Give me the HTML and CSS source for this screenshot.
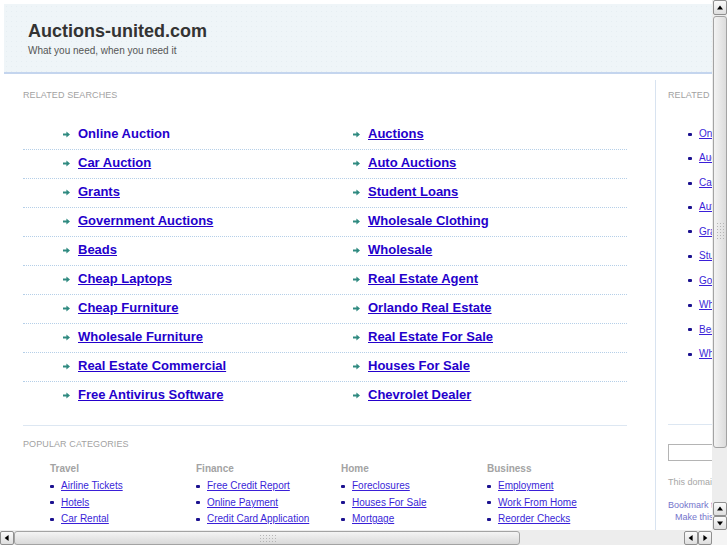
FILE: index.html
```html
<!DOCTYPE html>
<html>
<head>
<meta charset="utf-8">
<title>Auctions-united.com</title>
<link rel="stylesheet" href="styles.css">
</head>
<body>
<div class="viewport">
  <div class="content">
    <div class="page">
      <header class="header">
        <h1 class="title">Auctions-united.com</h1>
        <p class="tagline">What you need, when you need it</p>
      </header>
      <div class="main">
        <div class="leftcol">
          <h2 class="label">RELATED SEARCHES</h2>
          <div class="rs-list">
            <div class="rs-row"><div class="rs-cell"><svg class="arr" viewBox="0 0 7 7"><path d="M0 2.5h3.4V0.4L7 3.5 3.4 6.6V4.5H0z"/></svg><a class="big nou">Online Auction</a></div><div class="rs-cell"><svg class="arr" viewBox="0 0 7 7"><path d="M0 2.5h3.4V0.4L7 3.5 3.4 6.6V4.5H0z"/></svg><a class="big">Auctions</a></div></div>
            <div class="rs-row"><div class="rs-cell"><svg class="arr" viewBox="0 0 7 7"><path d="M0 2.5h3.4V0.4L7 3.5 3.4 6.6V4.5H0z"/></svg><a class="big">Car Auction</a></div><div class="rs-cell"><svg class="arr" viewBox="0 0 7 7"><path d="M0 2.5h3.4V0.4L7 3.5 3.4 6.6V4.5H0z"/></svg><a class="big">Auto Auctions</a></div></div>
            <div class="rs-row"><div class="rs-cell"><svg class="arr" viewBox="0 0 7 7"><path d="M0 2.5h3.4V0.4L7 3.5 3.4 6.6V4.5H0z"/></svg><a class="big">Grants</a></div><div class="rs-cell"><svg class="arr" viewBox="0 0 7 7"><path d="M0 2.5h3.4V0.4L7 3.5 3.4 6.6V4.5H0z"/></svg><a class="big">Student Loans</a></div></div>
            <div class="rs-row"><div class="rs-cell"><svg class="arr" viewBox="0 0 7 7"><path d="M0 2.5h3.4V0.4L7 3.5 3.4 6.6V4.5H0z"/></svg><a class="big">Government Auctions</a></div><div class="rs-cell"><svg class="arr" viewBox="0 0 7 7"><path d="M0 2.5h3.4V0.4L7 3.5 3.4 6.6V4.5H0z"/></svg><a class="big">Wholesale Clothing</a></div></div>
            <div class="rs-row"><div class="rs-cell"><svg class="arr" viewBox="0 0 7 7"><path d="M0 2.5h3.4V0.4L7 3.5 3.4 6.6V4.5H0z"/></svg><a class="big">Beads</a></div><div class="rs-cell"><svg class="arr" viewBox="0 0 7 7"><path d="M0 2.5h3.4V0.4L7 3.5 3.4 6.6V4.5H0z"/></svg><a class="big">Wholesale</a></div></div>
            <div class="rs-row"><div class="rs-cell"><svg class="arr" viewBox="0 0 7 7"><path d="M0 2.5h3.4V0.4L7 3.5 3.4 6.6V4.5H0z"/></svg><a class="big">Cheap Laptops</a></div><div class="rs-cell"><svg class="arr" viewBox="0 0 7 7"><path d="M0 2.5h3.4V0.4L7 3.5 3.4 6.6V4.5H0z"/></svg><a class="big">Real Estate Agent</a></div></div>
            <div class="rs-row"><div class="rs-cell"><svg class="arr" viewBox="0 0 7 7"><path d="M0 2.5h3.4V0.4L7 3.5 3.4 6.6V4.5H0z"/></svg><a class="big">Cheap Furniture</a></div><div class="rs-cell"><svg class="arr" viewBox="0 0 7 7"><path d="M0 2.5h3.4V0.4L7 3.5 3.4 6.6V4.5H0z"/></svg><a class="big">Orlando Real Estate</a></div></div>
            <div class="rs-row"><div class="rs-cell"><svg class="arr" viewBox="0 0 7 7"><path d="M0 2.5h3.4V0.4L7 3.5 3.4 6.6V4.5H0z"/></svg><a class="big">Wholesale Furniture</a></div><div class="rs-cell"><svg class="arr" viewBox="0 0 7 7"><path d="M0 2.5h3.4V0.4L7 3.5 3.4 6.6V4.5H0z"/></svg><a class="big">Real Estate For Sale</a></div></div>
            <div class="rs-row"><div class="rs-cell"><svg class="arr" viewBox="0 0 7 7"><path d="M0 2.5h3.4V0.4L7 3.5 3.4 6.6V4.5H0z"/></svg><a class="big">Real Estate Commercial</a></div><div class="rs-cell"><svg class="arr" viewBox="0 0 7 7"><path d="M0 2.5h3.4V0.4L7 3.5 3.4 6.6V4.5H0z"/></svg><a class="big">Houses For Sale</a></div></div>
            <div class="rs-row last"><div class="rs-cell"><svg class="arr" viewBox="0 0 7 7"><path d="M0 2.5h3.4V0.4L7 3.5 3.4 6.6V4.5H0z"/></svg><a class="big">Free Antivirus Software</a></div><div class="rs-cell"><svg class="arr" viewBox="0 0 7 7"><path d="M0 2.5h3.4V0.4L7 3.5 3.4 6.6V4.5H0z"/></svg><a class="big">Chevrolet Dealer</a></div></div>
          </div>
          <div class="popular">
            <h2 class="label">POPULAR CATEGORIES</h2>
            <div class="cats">
              <div class="cat">
                <h3 class="cat-title">Travel</h3>
                <ul class="cat-list">
                  <li><a class="small">Airline Tickets</a></li>
                  <li><a class="small">Hotels</a></li>
                  <li><a class="small">Car Rental</a></li>
                </ul>
              </div>
              <div class="cat">
                <h3 class="cat-title">Finance</h3>
                <ul class="cat-list">
                  <li><a class="small">Free Credit Report</a></li>
                  <li><a class="small">Online Payment</a></li>
                  <li><a class="small">Credit Card Application</a></li>
                </ul>
              </div>
              <div class="cat">
                <h3 class="cat-title">Home</h3>
                <ul class="cat-list">
                  <li><a class="small">Foreclosures</a></li>
                  <li><a class="small">Houses For Sale</a></li>
                  <li><a class="small">Mortgage</a></li>
                </ul>
              </div>
              <div class="cat">
                <h3 class="cat-title">Business</h3>
                <ul class="cat-list">
                  <li><a class="small">Employment</a></li>
                  <li><a class="small">Work From Home</a></li>
                  <li><a class="small">Reorder Checks</a></li>
                </ul>
              </div>
            </div>
          </div>
        </div>
        <div class="rightcol">
          <h2 class="label">RELATED SEARCHES</h2>
          <ul class="side-list">
            <li><a class="small">Online Auction</a></li>
            <li><a class="small">Auctions</a></li>
            <li><a class="small">Car Auction</a></li>
            <li><a class="small">Auto Auctions</a></li>
            <li><a class="small">Grants</a></li>
            <li><a class="small">Student Loans</a></li>
            <li><a class="small">Government Auctions</a></li>
            <li><a class="small">Wholesale Clothing</a></li>
            <li><a class="small">Beads</a></li>
            <li><a class="small">Wholesale</a></li>
          </ul>
          <div class="side-bottom">
            <div class="search-box"></div>
            <p class="domain-note">This domain may be for sale</p>
            <p class="bm"><a class="bm-link">Bookmark this page</a></p>
            <p class="bm indent"><a class="bm-link">Make this your Homepage</a></p>
          </div>
        </div>
      </div>
    </div>
  </div>
  <div class="vscroll">
    <div class="sbtn up"></div>
    <div class="vthumb"><span class="grip vgrip"></span></div>
    <div class="vtrough"></div>
    <div class="sbtn up"></div>
    <div class="sbtn down"></div>
  </div>
  <div class="hscroll">
    <div class="sbtn left"></div>
    <div class="hthumb"><span class="grip hgrip"></span></div>
    <div class="htrough"></div>
    <div class="sbtn left"></div>
    <div class="sbtn right"></div>
  </div>
  <div class="corner"></div>
</div>
</body>
</html>
```
FILE: styles.css
```css
html, body {
  margin: 0;
  padding: 0;
  background: #ffffff;
}
body {
  font-family: "Liberation Sans", Arial, sans-serif;
}
.viewport {
  width: 727px;
  height: 545px;
  display: grid;
  grid-template-columns: 712px 15px;
  grid-template-rows: 530px 15px;
  overflow: hidden;
}
.content {
  overflow: hidden;
  background: #fff;
}
.page {
  width: 940px;
  margin: 4px 0 0 4px;
}
.header {
  height: 52px;
  padding: 16px 0 0 24px;
  background-color: #eff5f8;
  background-image: radial-gradient(circle, #e6eef2 0.6px, transparent 0.8px);
  background-size: 5px 5px;
  border-bottom: 2px solid #c4d5ee;
}
.title {
  margin: 0;
  font-size: 18px;
  line-height: 22px;
  font-weight: bold;
  color: #333333;
}
.tagline {
  margin: 2px 0 0 0;
  font-size: 10px;
  line-height: 13px;
  color: #555555;
}
.main {
  display: flex;
  margin-top: 6px;
}
.leftcol {
  width: 604px;
  padding: 10px 28px 0 19px;
  border-right: 1px solid #d8e3f0;
  height: 460px;
}
.label {
  margin: 0;
  font-size: 9px;
  line-height: 11px;
  font-weight: normal;
  color: #a2a2a2;
  letter-spacing: 0.1px;
}
.rs-list {
  margin-top: 20px;
}
.rs-row {
  display: grid;
  grid-template-columns: 290px 314px;
  padding: 5px 0 7px 0;
  border-bottom: 1px dotted #b5cfe8;
  font-size: 13px;
  line-height: 16px;
}
.rs-row.last {
  border-bottom: none;
}
.rs-cell {
  display: flex;
  align-items: center;
  padding-left: 40px;
  gap: 8px;
  height: 16px;
}
.arr {
  width: 7px;
  height: 7px;
  fill: #2f8a80;
  flex: none;
}
a {
  cursor: pointer;
}
.big {
  font-size: 13px;
  line-height: 16px;
  font-weight: bold;
  color: #2400cc;
  text-decoration: underline;
}
.big.nou {
  text-decoration: none;
}
.popular {
  margin-top: 15px;
  border-top: 1px solid #dde7f2;
  padding-top: 13px;
}
.cats {
  margin-top: 13px;
  padding-left: 27px;
  display: grid;
  grid-template-columns: 146px 145px 146px 145px;
}
.cat-title {
  margin: 0;
  font-size: 10px;
  line-height: 12px;
  font-weight: bold;
  color: #a3a3a3;
}
.cat-list {
  list-style: none;
  margin: 3px 0 0 0;
  padding: 0;
}
.cat-list li, .side-list li {
  display: flex;
  align-items: center;
  font-size: 10px;
  line-height: 16.5px;
  height: 16.5px;
}
.cat-list li::before, .side-list li::before {
  content: "";
  width: 4px;
  height: 3px;
  border-radius: 1px;
  background: #1c1290;
  margin-right: 7px;
  flex: none;
}
.small {
  font-size: 10px;
  color: #3a1fd8;
  text-decoration: underline;
}
.rightcol {
  width: 260px;
  padding: 10px 0 0 12px;
}
.side-list {
  list-style: none;
  margin: 21px 0 0 0;
  padding: 0 0 0 20px;
}
.side-list li {
  line-height: 24.45px;
  height: 24.45px;
}
.side-bottom {
  margin-top: 58px;
  border-top: 1px solid #dde7f2;
  padding-top: 19px;
}
.search-box {
  width: 150px;
  height: 15px;
  border: 1px solid #b4b4b4;
  background: #fff;
}
.domain-note {
  margin: 16px 0 0 0;
  font-size: 9px;
  line-height: 11px;
  color: #a6a6a6;
}
.bm {
  margin: 11px 0 0 0;
  font-size: 9px;
  line-height: 12px;
}
.bm.indent {
  margin-top: 0;
  padding-left: 7px;
}
.bm-link {
  color: #7474cc;
  text-decoration: none;
}

/* scrollbars */
.vscroll {
  display: flex;
  flex-direction: column;
  background-color: #ededed;
  background-image: radial-gradient(circle, #dcdcdc 0.5px, transparent 0.7px);
  background-size: 2px 2px;
  padding-left: 1px;
}
.hscroll {
  display: flex;
  background-color: #ededed;
  background-image: radial-gradient(circle, #dcdcdc 0.5px, transparent 0.7px);
  background-size: 2px 2px;
  padding-top: 1px;
}
.corner {
  background: #f4f4f4;
}
.sbtn {
  box-sizing: border-box;
  width: 14px;
  height: 14px;
  flex: none;
  border: 1px solid #8f8f8f;
  border-radius: 2px;
  background: linear-gradient(#fbfbfb, #dedede);
  position: relative;
}
.sbtn::after {
  content: "";
  position: absolute;
  left: 50%;
  top: 50%;
  width: 0;
  height: 0;
  border: 3.5px solid transparent;
}
.sbtn.up::after {
  border-bottom: 4px solid #000;
  border-top: none;
  transform: translate(-50%, -60%);
}
.sbtn.down::after {
  border-top: 4px solid #000;
  border-bottom: none;
  transform: translate(-50%, -40%);
}
.sbtn.left::after {
  border-right: 4px solid #000;
  border-left: none;
  transform: translate(-60%, -50%);
}
.sbtn.right::after {
  border-left: 4px solid #000;
  border-right: none;
  transform: translate(-40%, -50%);
}
.vscroll .sbtn:first-child {
  height: 15px;
}
.vthumb {
  box-sizing: border-box;
  height: 432px;
  width: 14px;
  margin-top: 1px;
  border: 1px solid #a3a3a3;
  border-radius: 3px;
  background: linear-gradient(90deg, #f3f3f3, #dcdcdc);
  display: flex;
  justify-content: center;
  padding-top: 205px;
  flex: none;
}
.vtrough {
  flex: 1;
}
.hthumb {
  box-sizing: border-box;
  width: 506px;
  height: 14px;
  border: 1px solid #a3a3a3;
  border-radius: 3px;
  background: linear-gradient(#f4f4f4, #d9d9d9);
  display: flex;
  align-items: center;
  padding-left: 244px;
  flex: none;
}
.htrough {
  flex: 1;
}
.grip {
  display: block;
  background-image: radial-gradient(circle, #b5b5b5 0.6px, transparent 0.9px);
  background-size: 3px 3px;
}
.vgrip {
  width: 9px;
  height: 18px;
}
.hgrip {
  width: 18px;
  height: 9px;
}
```
